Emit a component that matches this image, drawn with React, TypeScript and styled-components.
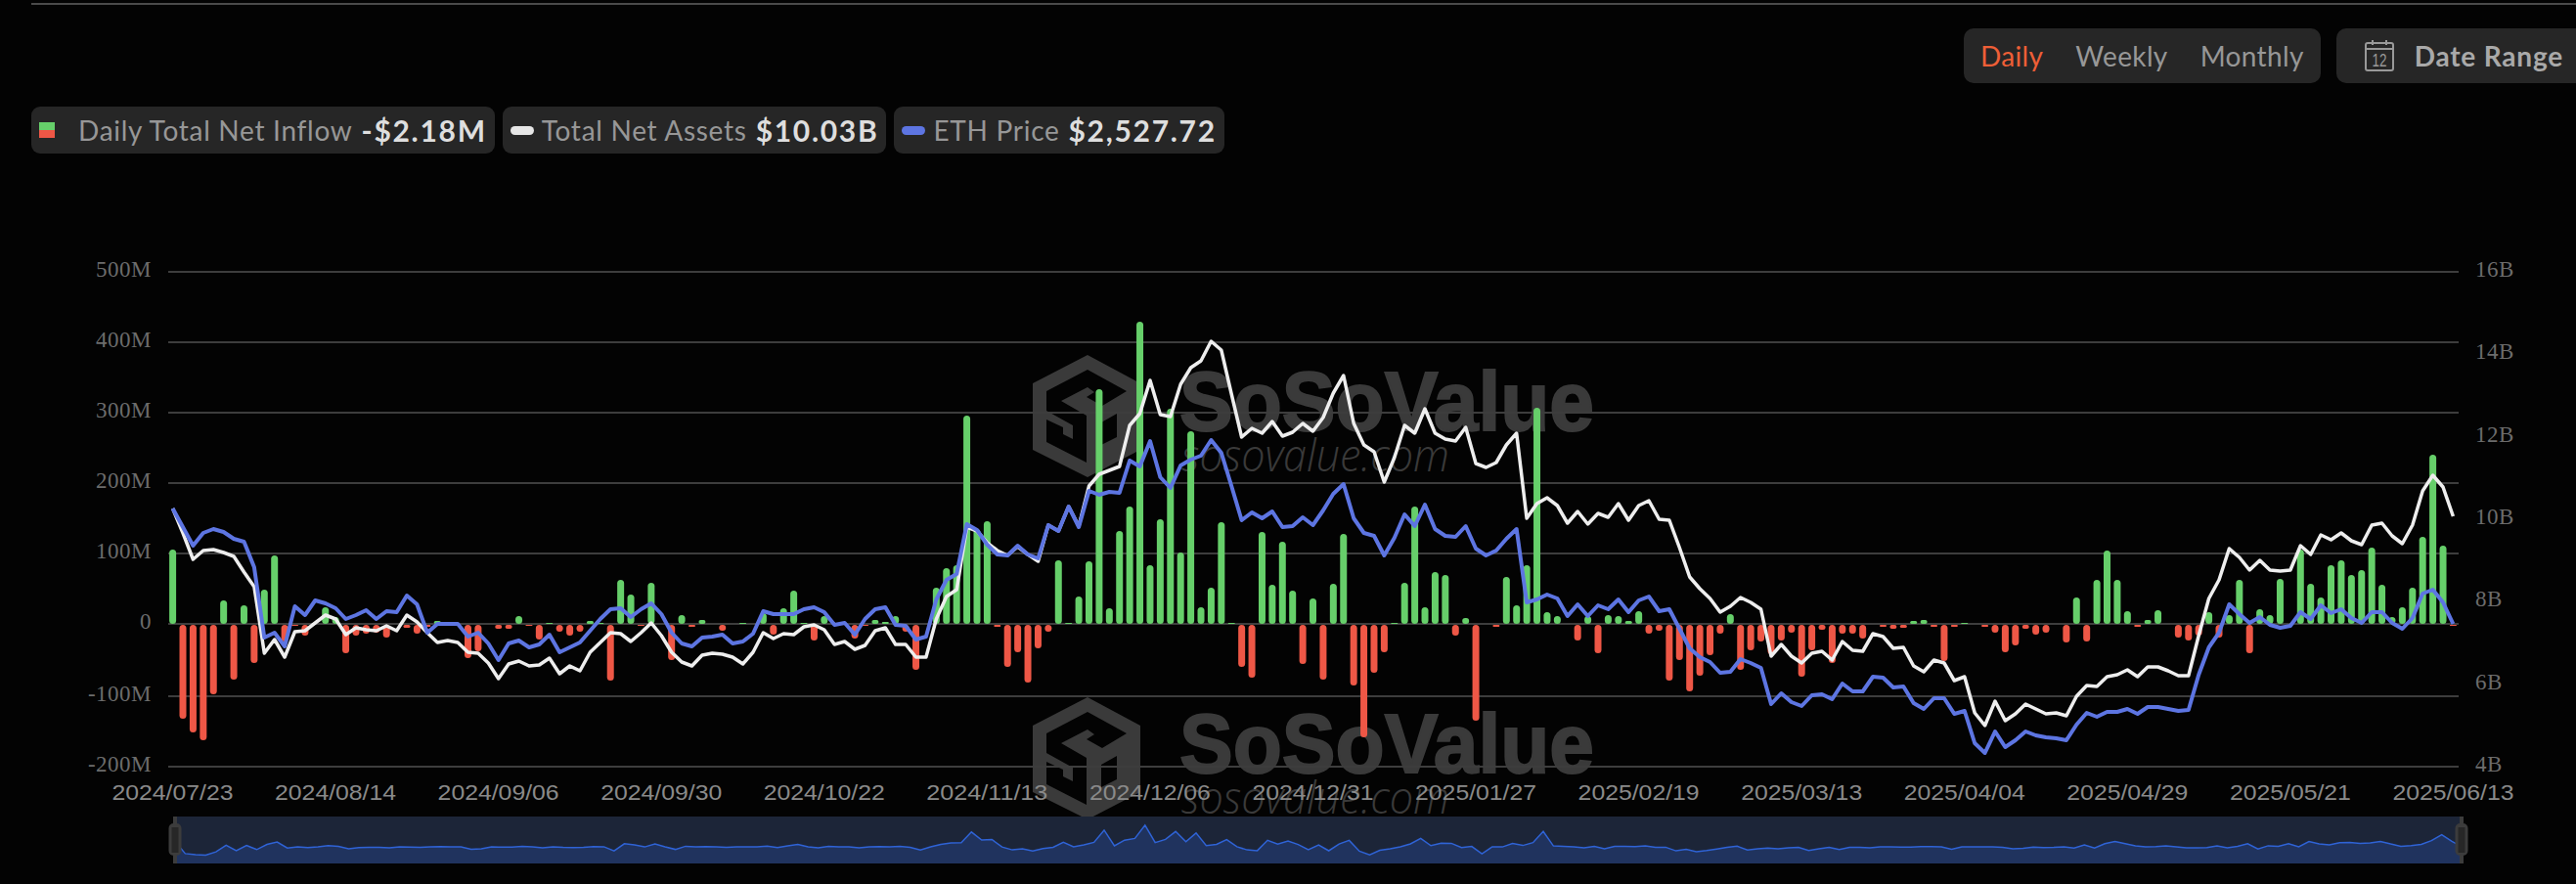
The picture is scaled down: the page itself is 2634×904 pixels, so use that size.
import React from 'react';
import styled, { createGlobalStyle } from 'styled-components';

const GlobalStyle = createGlobalStyle`
  html, body {
    margin: 0;
    padding: 0;
    background: #030303;
  }
`;

const Page = styled.div`
  width: 2634px;
  height: 904px;
  overflow: hidden;
  padding-top: 3px;
  box-sizing: border-box;
  background: #030303;
  font-family: 'Lato', 'Liberation Sans', sans-serif;
  display: flex;
  flex-direction: column;
`;

const TopRule = styled.div`
  height: 2px;
  margin-left: 32px;
  background: #4a4a4a;
`;

const Toolbar = styled.div`
  display: flex;
  justify-content: flex-end;
  gap: 16px;
  margin-top: 24px;
`;

const Panel = styled.div`
  display: flex;
  align-items: center;
  height: 56px;
  background: #262626;
  border-radius: 10px 0 0 10px;
`;

const PeriodPanel = styled(Panel)`
  border-radius: 10px;
  gap: 33px;
  padding: 0 17px;
`;

const DatePanel = styled(Panel)`
  gap: 21px;
  padding: 0 13px 0 29px;
`;

const PeriodItem = styled.span<{ $active?: boolean }>`
  font-size: 28px;
  letter-spacing: 0.35px;
  color: ${props => (props.$active ? '#ee5f37' : '#979797')};
`;

const DateLabel = styled.span`
  font-size: 28px;
  font-weight: 700;
  letter-spacing: 0.8px;
  color: #a9a9a9;
`;

const LegendRow = styled.div`
  display: flex;
  gap: 8px;
  margin: 24px 0 0 32px;
`;

const LegendChip = styled.div`
  display: flex;
  align-items: center;
  height: 48px;
  padding: 0 8px;
  background: #262626;
  border-radius: 9px;
`;

const Swatch = styled.span`
  width: 16px;
  height: 16px;
  margin-right: 24px;
  background: linear-gradient(#66cf6a 50%, #ee5746 50%);
`;

const LineKey = styled.span<{ $color: string }>`
  width: 24px;
  height: 9px;
  margin-right: 8px;
  border-radius: 5px;
  background: ${props => props.$color};
`;

const LegendName = styled.span`
  font-size: 28px;
  letter-spacing: 0.72px;
  color: #979797;
  margin-right: 9px;
`;

const LegendValue = styled.span`
  font-size: 30px;
  font-weight: 700;
  letter-spacing: 1.7px;
  color: #dedede;
`;

const ChartSvg = styled.svg`
  display: block;
  flex: none;
`;

const AxisText = styled.text`
  font-family: 'Liberation Serif', serif;
  font-size: 23px;
  letter-spacing: 0.5px;
  fill: #6c6c6c;
`;

const DateText = styled.text`
  font-family: 'Liberation Sans', sans-serif;
  font-size: 22.6px;
  fill: #8a8a8a;
`;

const WatermarkTitle = styled.text`
  font-family: 'Liberation Sans', sans-serif;
  font-size: 86px;
  font-weight: 700;
  fill: #3a3a3a;
  stroke: #3a3a3a;
  stroke-width: 2px;
`;

const WatermarkUrl = styled.text`
  font-family: 'Open Sans', sans-serif;
  font-size: 46px;
  font-style: italic;
  font-weight: 300;
  fill: #3a3a3a;
`;

// pixel heights from the zero line, one per trading day
const inflow = [
  76, -96, -110, -118, -71, 24, -56, 19, -39, 35,
  70, -17, -1, -11, 0, 17, 7, -29, -11, -9,
  -8, -13, 0, -3, -9, -2, 3, 0, 0, -34,
  -27, 0, -4, -4, 8, -1, -15, 1, -7, -11,
  -7, 3, 1, -57, 45, 30, -1, 42, 0, -36,
  9, -2, 4, 0, -6, 0, 1, 0, 11, -10,
  16, 34, 1, -16, 8, 0, 0, -14, -1, 4,
  2, 8, -7, -46, 0, 37, 57, 60, 213, 97,
  105, -2, -43, -28, -59, -24, -7, 65, 1, 28,
  64, 240, 16, 95, 120, 309, 60, 107, 220, 73,
  197, 17, 37, 104, 1, -43, -54, 94, 40, 84,
  34, -40, 26, -56, 41, 92, -62, -115, -49, -28,
  1, 42, 120, 17, 53, 50, -11, 6, -98, 0,
  -2, 48, 19, 60, 221, 12, 8, 0, -16, 8,
  -29, 9, 8, 3, 13, -9, -6, -57, -36, -68,
  -52, -31, -9, 10, -46, -26, -17, -30, -16, -8,
  -53, -26, -5, -39, -9, -9, -14, 0, -2, -4,
  -3, 3, 4, -2, -37, -2, 1, 0, -2, -8,
  -28, -21, -4, -10, -8, 0, -18, 27, -17, 45,
  75, 45, 13, -2, 4, 14, 0, -13, -16, -11,
  12, -13, 9, 45, -29, 15, 9, 46, 0, 76,
  41, 27, 60, 65, 50, 55, 78, 40, 7, 17,
  37, 89, 173, 80, -1,
];

const ethPrice = [
  520, 539, 558, 545, 541, 544, 551, 554, 580, 652,
  647, 661, 620, 629, 614, 617, 622, 633, 629, 624,
  633, 625, 626, 609, 618, 647, 638, 638, 638, 651,
  647, 658, 675, 658, 655, 662, 659, 649, 667, 662,
  657, 645, 633, 623, 622, 631, 623, 617, 628, 647,
  658, 661, 652, 651, 649, 658, 656, 648, 625, 628,
  628, 628, 623, 621, 626, 639, 637, 649, 633, 623,
  621, 639, 640, 654, 651, 613, 593, 587, 536, 542,
  557, 567, 568, 558, 567, 571, 537, 543, 518, 539,
  502, 506, 503, 504, 471, 477, 451, 488, 499, 476,
  470, 466, 450, 463, 497, 532, 524, 530, 523, 539,
  538, 529, 537, 522, 505, 495, 530, 545, 548, 568,
  550, 526, 538, 516, 541, 548, 549, 538, 561, 568,
  563, 551, 541, 616, 613, 608, 612, 630, 618, 630,
  619, 623, 613, 626, 614, 610, 625, 623, 643, 663,
  672, 677, 688, 687, 674, 678, 683, 720, 709, 718,
  722, 711, 710, 715, 699, 707, 707, 692, 693, 703,
  702, 719, 725, 714, 714, 730, 727, 760, 770, 748,
  764, 757, 748, 752, 754, 755, 757, 741, 729, 733,
  728, 728, 725, 730, 723, 723, 725, 727, 726, 690,
  662, 647, 618, 628, 637, 631, 639, 642, 640, 626,
  633, 619, 627, 623, 632, 637, 626, 626, 637, 643,
  632, 607, 603, 616, 638,
];

const netAssets = [
  520, 545, 572, 563, 562, 565, 569, 585, 600, 668,
  654, 672, 646, 645, 637, 629, 633, 649, 642, 644,
  645, 640, 645, 629, 636, 647, 657, 655, 657, 667,
  668, 678, 694, 679, 676, 681, 680, 673, 689, 681,
  686, 667, 657, 647, 648, 656, 647, 637, 650, 667,
  677, 681, 670, 668, 669, 672, 679, 667, 647, 653,
  648, 649, 641, 639, 644, 659, 656, 664, 660, 645,
  642, 659, 659, 672, 672, 633, 610, 603, 539, 543,
  555, 563, 568, 559, 567, 574, 537, 543, 518, 538,
  497, 485, 481, 477, 435, 423, 389, 424, 426, 393,
  376, 369, 349, 358, 403, 447, 438, 443, 431, 446,
  442, 433, 441, 427, 402, 384, 433, 455, 462, 493,
  468, 435, 443, 418, 443, 449, 451, 437, 474, 478,
  473, 455, 443, 530, 515, 509, 517, 535, 523, 536,
  525, 529, 515, 532, 517, 512, 531, 532, 560, 590,
  602, 612, 626, 620, 611, 616, 623, 671, 659, 671,
  678, 668, 666, 675, 656, 665, 666, 648, 651, 663,
  662, 681, 687, 675, 678, 696, 692, 729, 742, 717,
  737, 730, 720, 725, 730, 729, 732, 712, 701, 702,
  692, 690, 685, 692, 682, 682, 686, 691, 691, 650,
  612, 593, 561, 570, 583, 573, 583, 584, 583, 558,
  567, 547, 552, 545, 553, 557, 537, 535, 548, 556,
  537, 502, 486, 498, 528,
];

const leftAxis = [
  ['500M', 278], ['400M', 350], ['300M', 422], ['200M', 494],
  ['100M', 566], ['0', 638], ['-100M', 712], ['-200M', 784],
] as const;

const rightAxis = ['16B', '14B', '12B', '10B', '8B', '6B', '4B'];

const dates = [
  '2024/07/23', '2024/08/14', '2024/09/06', '2024/09/30', '2024/10/22',
  '2024/11/13', '2024/12/06', '2024/12/31', '2025/01/27', '2025/02/19',
  '2025/03/13', '2025/04/04', '2025/04/29', '2025/05/21', '2025/06/13',
];

const ZERO_Y = 638;
const barX = (i: number) => 176.6 + i * 10.41;
const toLine = (ys: number[]) => ys.map((y, i) => `${barX(i).toFixed(1)},${y}`).join(' ');

const miniX = (i: number) => 179 + i * 10.44;
const miniY = (v: number) => 866 - v / 14;
const miniLine = inflow.map((v, i) => `${miniX(i).toFixed(1)},${miniY(v).toFixed(1)}`).join(' ');

const Watermark: React.FC<{ y: number }> = ({ y }) => (
  <g transform={`translate(0 ${y})`}>
    <path
      transform="translate(1056 363)"
      fill="#3a3a3a"
      fillRule="evenodd"
      d="M56 0L110 29V97L56 125L0 97V29ZM14 37L56 15L96 37L71 52L55 43L63 38L56 33L29 47L55 62V110L14 89V66L31 74V81L41 86V72L14 57ZM70 69L86 60V84L70 92Z"
    />
    <WatermarkTitle x={1206} y={440} textLength={424} lengthAdjust="spacingAndGlyphs">SoSoValue</WatermarkTitle>
    <WatermarkUrl x={1208} y={482} textLength={274} lengthAdjust="spacingAndGlyphs">sosovalue.com</WatermarkUrl>
  </g>
);

const Handle: React.FC<{ x: number }> = ({ x }) => (
  <g>
    <rect x={x - 2} y={835} width={4} height={48} fill="#3c3c3c" />
    <rect x={x - 6.5} y={842} width={13} height={33} rx={5} fill="#3c3c3c" />
    <rect x={x - 3.5} y={846} width={7} height={26} fill="#272727" />
  </g>
);

const Chart: React.FC = () => (
  <ChartSvg width={2634} height={747} viewBox="0 157 2634 747">
    <Watermark y={0} />
    <Watermark y={350} />

    {leftAxis.map(([label, y]) => (
      <React.Fragment key={label}>
        <rect x={172} y={y - 1} width={2342} height={2} fill="#3d3d3d" />
        <AxisText x={155} y={y + 5} textAnchor="end">{label}</AxisText>
      </React.Fragment>
    ))}
    {rightAxis.map((label, i) => (
      <AxisText key={label} x={2531} y={283 + i * 84.33}>{label}</AxisText>
    ))}

    {inflow.map((v, i) => {
      if (v === 0) return null;
      const h = Math.abs(v);
      return (
        <rect
          key={i}
          x={barX(i) - 3.5}
          y={v > 0 ? ZERO_Y - h : ZERO_Y + 1}
          width={7}
          height={h}
          rx={Math.min(3.5, h / 2)}
          fill={v > 0 ? '#66cf6a' : '#ee5746'}
        />
      );
    })}

    <polyline points={toLine(netAssets)} fill="none" stroke="#eeeeee" strokeWidth={3.5} strokeLinejoin="round" />
    <polyline points={toLine(ethPrice)} fill="none" stroke="#5d75e2" strokeWidth={4} strokeLinejoin="round" />

    {dates.map((d, i) => (
      <DateText key={d} x={176.5 + i * 166.57} y={818} textAnchor="middle" textLength={124} lengthAdjust="spacingAndGlyphs">
        {d}
      </DateText>
    ))}

    <rect x={179} y={835} width={2338} height={48} fill="#1c2538" />
    <polygon points={`179,883 ${miniLine} ${miniX(224).toFixed(1)},883`} fill="#20335e" />
    <polyline points={miniLine} fill="none" stroke="#2f63d6" strokeWidth={1.5} />
    <Handle x={179} />
    <Handle x={2517} />
  </ChartSvg>
);

const CalendarIcon: React.FC = () => (
  <svg width={30} height={32} viewBox="0 0 30 32" fill="none" stroke="#999999" strokeWidth={2}>
    <rect x={1} y={3} width={28} height={28} rx={2} />
    <path d="M1 9H29M8 0V5M22 0V5" />
    <text x={15} y={27} textAnchor="middle" textLength={15} lengthAdjust="spacingAndGlyphs" fontFamily="'Liberation Sans', sans-serif" fontSize={18} fill="#999999" stroke="none">12</text>
  </svg>
);

const App: React.FC = () => (
  <>
    <GlobalStyle />
    <Page>
      <TopRule />
      <Toolbar>
        <PeriodPanel>
          <PeriodItem $active>Daily</PeriodItem>
          <PeriodItem>Weekly</PeriodItem>
          <PeriodItem>Monthly</PeriodItem>
        </PeriodPanel>
        <DatePanel>
          <CalendarIcon />
          <DateLabel>Date Range</DateLabel>
        </DatePanel>
      </Toolbar>
      <LegendRow>
        <LegendChip>
          <Swatch />
          <LegendName>Daily Total Net Inflow</LegendName>
          <LegendValue>-$2.18M</LegendValue>
        </LegendChip>
        <LegendChip>
          <LineKey $color="#e6e6e6" />
          <LegendName>Total Net Assets</LegendName>
          <LegendValue>$10.03B</LegendValue>
        </LegendChip>
        <LegendChip>
          <LineKey $color="#5d75e2" />
          <LegendName>ETH Price</LegendName>
          <LegendValue>$2,527.72</LegendValue>
        </LegendChip>
      </LegendRow>
      <Chart />
    </Page>
  </>
);

export default App;
